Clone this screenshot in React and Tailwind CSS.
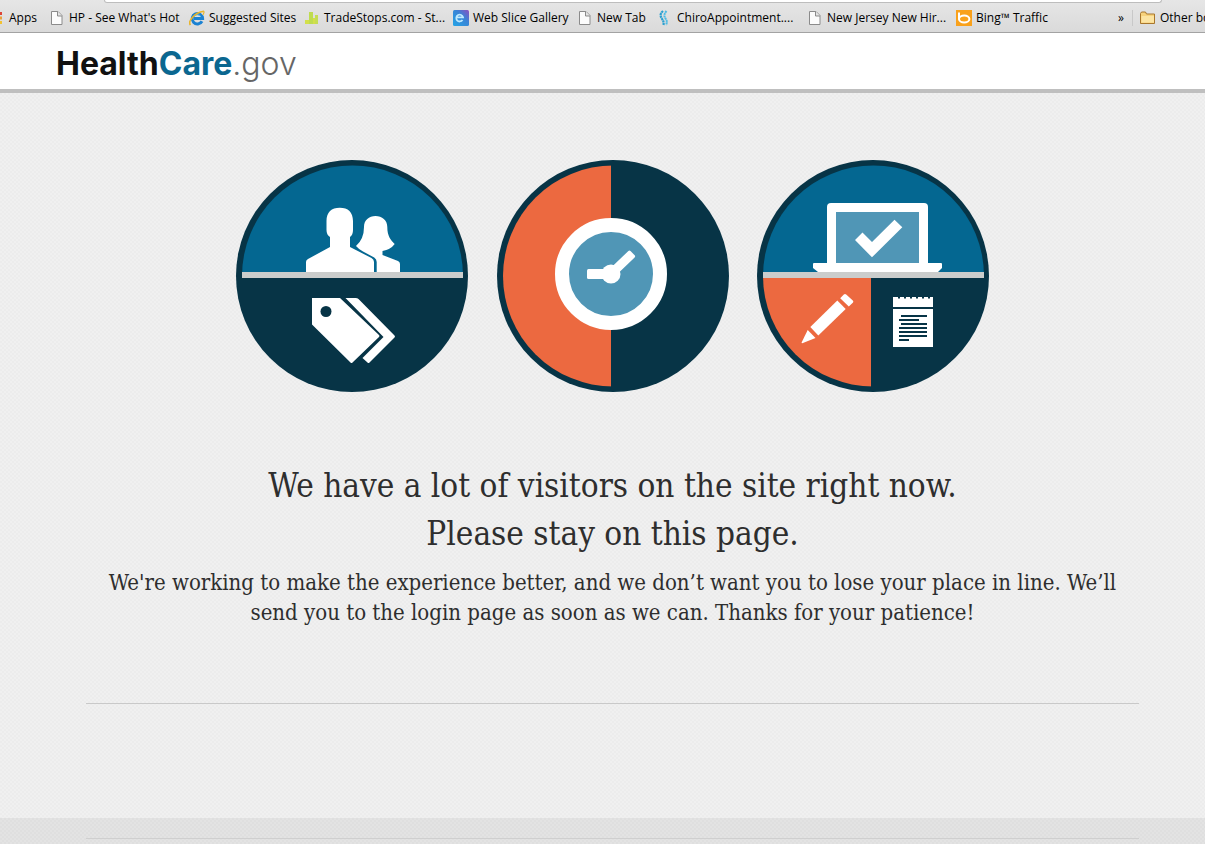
import React from 'react';

const PageIcon = () => (
  <svg viewBox="0 0 16 16" className="size-4 shrink-0">
    <path d="M2.5 1.5h6.5l4 4v9h-10.5z" fill="#fcfcfc" stroke="#8b8b8b" />
    <path d="M8.5 1.5v4.5h4.5" fill="#e4e4e4" stroke="#8b8b8b" />
  </svg>
);

const ExplorerIcon = () => (
  <svg viewBox="0 0 16 16" className="size-4 shrink-0">
    <path d="M13 11.2A5.2 5.2 0 1 1 13.6 8.6H5" fill="none" stroke="#1b82d2" strokeWidth="3" />
    <path d="M4.5 6.8a4.5 4.5 0 0 1 7.5 0" fill="none" stroke="#6cc4f2" strokeWidth="1" />
    <path d="M1.500 15C-1.500 12 5 2.500 14.800 1.200" fill="none" stroke="#e9b52c" strokeWidth="1.6" />
    <path d="M14.5 1c1.200.8 0 3-.8 4" fill="none" stroke="#e9b52c" strokeWidth="1.2" />
  </svg>
);

const BarsIcon = () => (
  <svg viewBox="0 0 16 16" className="size-4 shrink-0">
    <path d="M1 10h4v4H1z" fill="#d3e04a" />
    <path d="M5 2h4v12H5z" fill="#bfdc50" />
    <path d="M9 8h2v6H9z" fill="#d3e04a" />
    <path d="M11 5h3v9h-3z" fill="#c5dd55" />
  </svg>
);

const SliceIcon = () => (
  <svg viewBox="0 0 16 16" className="size-4 shrink-0">
    <defs>
      <linearGradient id="slice" x1="0" y1="1" x2="1" y2="0">
        <stop offset="0" stopColor="#23a5e6" />
        <stop offset="0.6" stopColor="#3b83d6" />
        <stop offset="1" stopColor="#8c4fc0" />
      </linearGradient>
    </defs>
    <rect width="16" height="16" rx="1.5" fill="url(#slice)" />
    <path d="M9.500 10A3.400 3.400 0 1 1 10 7.300H3.500" fill="none" stroke="#bfeaff" strokeWidth="1.8" />
  </svg>
);

const SpineIcon = () => (
  <svg viewBox="0 0 16 16" className="size-4 shrink-0">
    <path d="M6 1C2.500 4 3.500 6.500 4.800 8.500S7 12 6.500 15" fill="none" stroke="#2a9fd0" strokeWidth="2.2" strokeDasharray="2.2 0.5" />
    <path d="M9.500 1C6.500 4.500 7.200 6.500 8.500 8.500S10.500 12 9 15" fill="none" stroke="#4bbbe4" strokeWidth="2" strokeDasharray="2 0.5" />
  </svg>
);

const BingIcon = () => (
  <svg viewBox="0 0 16 16" className="size-4 shrink-0">
    <rect width="16" height="16" fill="#f9a11b" />
    <path d="M3 2.500v7" fill="none" stroke="#fff" strokeWidth="2" />
    <ellipse cx="8.200" cy="9" rx="5.200" ry="3.500" fill="none" stroke="#fff" strokeWidth="2" />
  </svg>
);

const FolderIcon = () => (
  <svg viewBox="0 0 16 16" className="size-4 shrink-0">
    <path d="M.5 13.500v-10l1-1.500h4l1 2h8v9.500z" fill="#f7d27c" stroke="#a8762c" />
    <path d="M1.500 6h12.500v6.500H1.500z" fill="#fce4a2" />
  </svg>
);

const bookmarks = [
  { label: "HP - See What's Hot", icon: PageIcon, width: 'w-[140px]' },
  { label: 'Suggested Sites', icon: ExplorerIcon, width: 'w-[115px]' },
  { label: 'TradeStops.com - St...', icon: BarsIcon, width: 'w-[149px]' },
  { label: 'Web Slice Gallery', icon: SliceIcon, width: 'w-[124px]' },
  { label: 'New Tab', icon: PageIcon, width: 'w-[80px]' },
  { label: 'ChiroAppointment....', icon: SpineIcon, width: 'w-[150px]' },
  { label: 'New Jersey New Hir...', icon: PageIcon, width: 'w-[149px]' },
  { label: 'Bing™ Traffic', icon: BingIcon, width: 'w-[124px]' },
];

function BookmarksBar() {
  return (
    <div className="border-b border-[#a3a3a3] bg-linear-to-b from-[#e6e6e6] to-[#dadada]">
      <div className="mr-[43px] ml-[104px] h-[3px] rounded-b-sm border border-t-0 border-[#bdbdbd] bg-white" />
      <nav className="flex h-[29px] items-center overflow-hidden font-['Open_Sans',sans-serif] text-xs whitespace-nowrap text-black">
        <a href="#apps" className="flex w-[49px] shrink-0 items-center gap-[7px]">
          <svg viewBox="0 0 2 12" className="h-3 w-[2px] shrink-0">
            <path d="M0 0h2v3H0z" fill="#dc4437" />
            <path d="M0 4.500h2v3H0z" fill="#e9a13b" />
            <path d="M0 9h2v3H0z" fill="#f2c230" />
          </svg>
          Apps
        </a>
        {bookmarks.map(({ label, icon: Icon, width }) => (
          <a key={label} href="#bookmark" className={`flex shrink-0 items-center gap-1 ${width}`}>
            <Icon />
            {label}
          </a>
        ))}
        <button type="button" className="ml-auto shrink-0 pr-2" aria-label="More bookmarks">»</button>
        <a href="#other" className="flex w-[73px] shrink-0 items-center gap-1 overflow-hidden border-l border-[#c8c8c8] pl-[7px]">
          <FolderIcon />
          Other bookmarks
        </a>
      </nav>
    </div>
  );
}

function Badge({ id, label, inner, children }) {
  return (
    <svg viewBox="0 0 232 232" className="size-[232px]" role="img" aria-label={label}>
      <clipPath id={id}>
        <circle cx="116.5" cy="116" r="110.5" />
      </clipPath>
      <circle cx="116" cy="116" r="116" fill="#073446" />
      <g clipPath={`url(#${id})`}>{inner}</g>
      {children}
    </svg>
  );
}

function PeopleBadge() {
  return (
    <Badge id="people" label="People and price tags" inner={<path d="M0 0h232v112H0z" fill="#046791" />}>
      <path d="M6 112h221v6H6z" fill="#cbcdcc" />
      {/* man */}
      <path
        d="M70 112v-10q0-2 2-3l22-12V77q-3.500-2-3.500-7v-9c0-9 5-13.300 13.300-13.300S117 52 117 61v9q0 5-3 7v10l21.500 11q2.500 1.500 2.500 4v10z"
        fill="#fff"
      />
      {/* woman */}
      <path
        d="M128 67c0-7 5-11 11.500-11s11.800 4 11.800 11c0 9 3.400 13 7.400 17q-4 5.500-12.200 7v4l15.500 6q2 1 2 3v8h-23.300v-10q0-3-2.500-4.500l-11.200-6q-4-2-7-5.500 8-7 8-19z"
        fill="#fff"
      />
      {/* price tags */}
      <path d="M76 138h28l39 37q1 1 0 2l-26.500 25.500q-1 1-2 0L76 164.500z" fill="#fff" />
      <path d="M109.500 138h10q2 0 3 1L158.500 175.500q1 1 0 2L133.500 202.500q-1 1-2 0l-5-4.500 21-21z" fill="#fff" />
      <circle cx="90" cy="151.500" r="5.500" fill="#073446" />
    </Badge>
  );
}

function ClockBadge() {
  return (
    <Badge id="clock" label="Clock" inner={<path d="M0 0h114v232H0z" fill="#ec6940" />}>
      <circle cx="114" cy="114" r="49" fill="#5096b6" stroke="#fff" strokeWidth="14" />
      <rect x="90" y="109" width="24" height="10" rx="1.5" fill="#fff" />
      <rect x="112" y="109.500" width="32" height="9" rx="1.5" fill="#fff" transform="rotate(-44 114 114)" />
      <circle cx="114" cy="114" r="9.500" fill="#fff" />
    </Badge>
  );
}

const noteLines = [
  [144, 156, 26],
  [142, 160, 20],
  [144, 164, 26],
  [142, 168, 28],
  [142, 172, 28],
  [142, 176, 28],
  [142, 180, 10],
];

function ApplyBadge() {
  return (
    <Badge
      id="apply"
      label="Laptop, pencil and notepad"
      inner={
        <>
          <path d="M0 0h232v112H0z" fill="#046791" />
          <path d="M0 118h114v114H0z" fill="#ec6940" />
        </>
      }
    >
      <path d="M6 112h221v6H6z" fill="#cbcdcc" />
      {/* laptop */}
      <path d="M70 104V47q0-4 4-4h93q4 0 4 4v57z" fill="#fff" />
      <path d="M79 52h83v51H79z" fill="#5096b6" />
      <path d="M57 103h127q1 0 1 1v4l-4 4H61l-5-4v-4q0-1 1-1z" fill="#fff" />
      <path d="M98 80l7.500-7.500 9.500 9.500 22.500-22.300 7.800 7.500L115 97.300z" fill="#fff" />
      {/* pencil */}
      <path d="M86.800 134.500q1.200-1.200 2.400 0l6.600 6q1.200 1.200 0 2.300l-4 3.700-8.600-8.200z" fill="#fff" />
      <path d="M80.300 140.500l8.400 8.500-27.400 26.500-8-8.500z" fill="#fff" />
      <path d="M50.700 170l7.800 8-13.200 5.200q-1 0-.6-1z" fill="#fff" />
      {/* notepad */}
      <path d="M136 137h40v10h-40zM136 149h40v38h-40z" fill="#fff" />
      <path d="M141 137.500h35" fill="none" stroke="#073446" strokeWidth="2" strokeDasharray="2 4" />
      {noteLines.map(([x, y, w]) => (
        <rect key={y} x={x} y={y - 1} width={w} height="2" fill="#073446" />
      ))}
    </Badge>
  );
}

export default function App() {
  return (
    <div className="flex min-h-screen flex-col overflow-x-hidden bg-[#e1e1e1]">
      <BookmarksBar />

      <header className="border-b-4 border-[#bfbfbf] bg-white pt-[11px] pb-[5px] pl-14">
        <a href="#home" className="font-[Inter,sans-serif] text-[32px] leading-10 font-bold text-[#111]">
          Health<span className="text-[#0b6790]">Care</span>
          <span className="font-light text-[#666]">.gov</span>
        </a>
      </header>

      <main className="bg-[repeating-conic-gradient(#f0f0f0_0_25%,#ececec_0_50%)] bg-[length:4px_4px] pt-[67px] pr-[66px] pb-[114px] pl-[86px]">
        <div className="mx-auto flex max-w-[753px] justify-between">
          <PeopleBadge />
          <ClockBadge />
          <ApplyBadge />
        </div>

        <section className="mt-[70px] border-b border-[#c9c9c9] pb-[75px] text-center font-['DejaVu_Serif_Condensed','DejaVu_Serif',serif] text-[#2e2e2e]">
          <h1 className="text-[33px] leading-12">
            We have a lot of visitors on the site right now.
            <br />
            Please stay on this page.
          </h1>
          <p className="mt-[10px] text-[22px] leading-[30px]">
            We're working to make the experience better, and we don’t want you to lose your place in line. We’ll
            <br />
            send you to the login page as soon as we can. Thanks for your patience!
          </p>
        </section>
      </main>

      <footer className="grow bg-[repeating-conic-gradient(#e3e3e3_0_25%,#dfdfdf_0_50%)] bg-[length:4px_4px] pt-5 pr-[66px] pl-[86px]">
        <hr className="border-[#cfcfcf]" />
      </footer>
    </div>
  );
}
